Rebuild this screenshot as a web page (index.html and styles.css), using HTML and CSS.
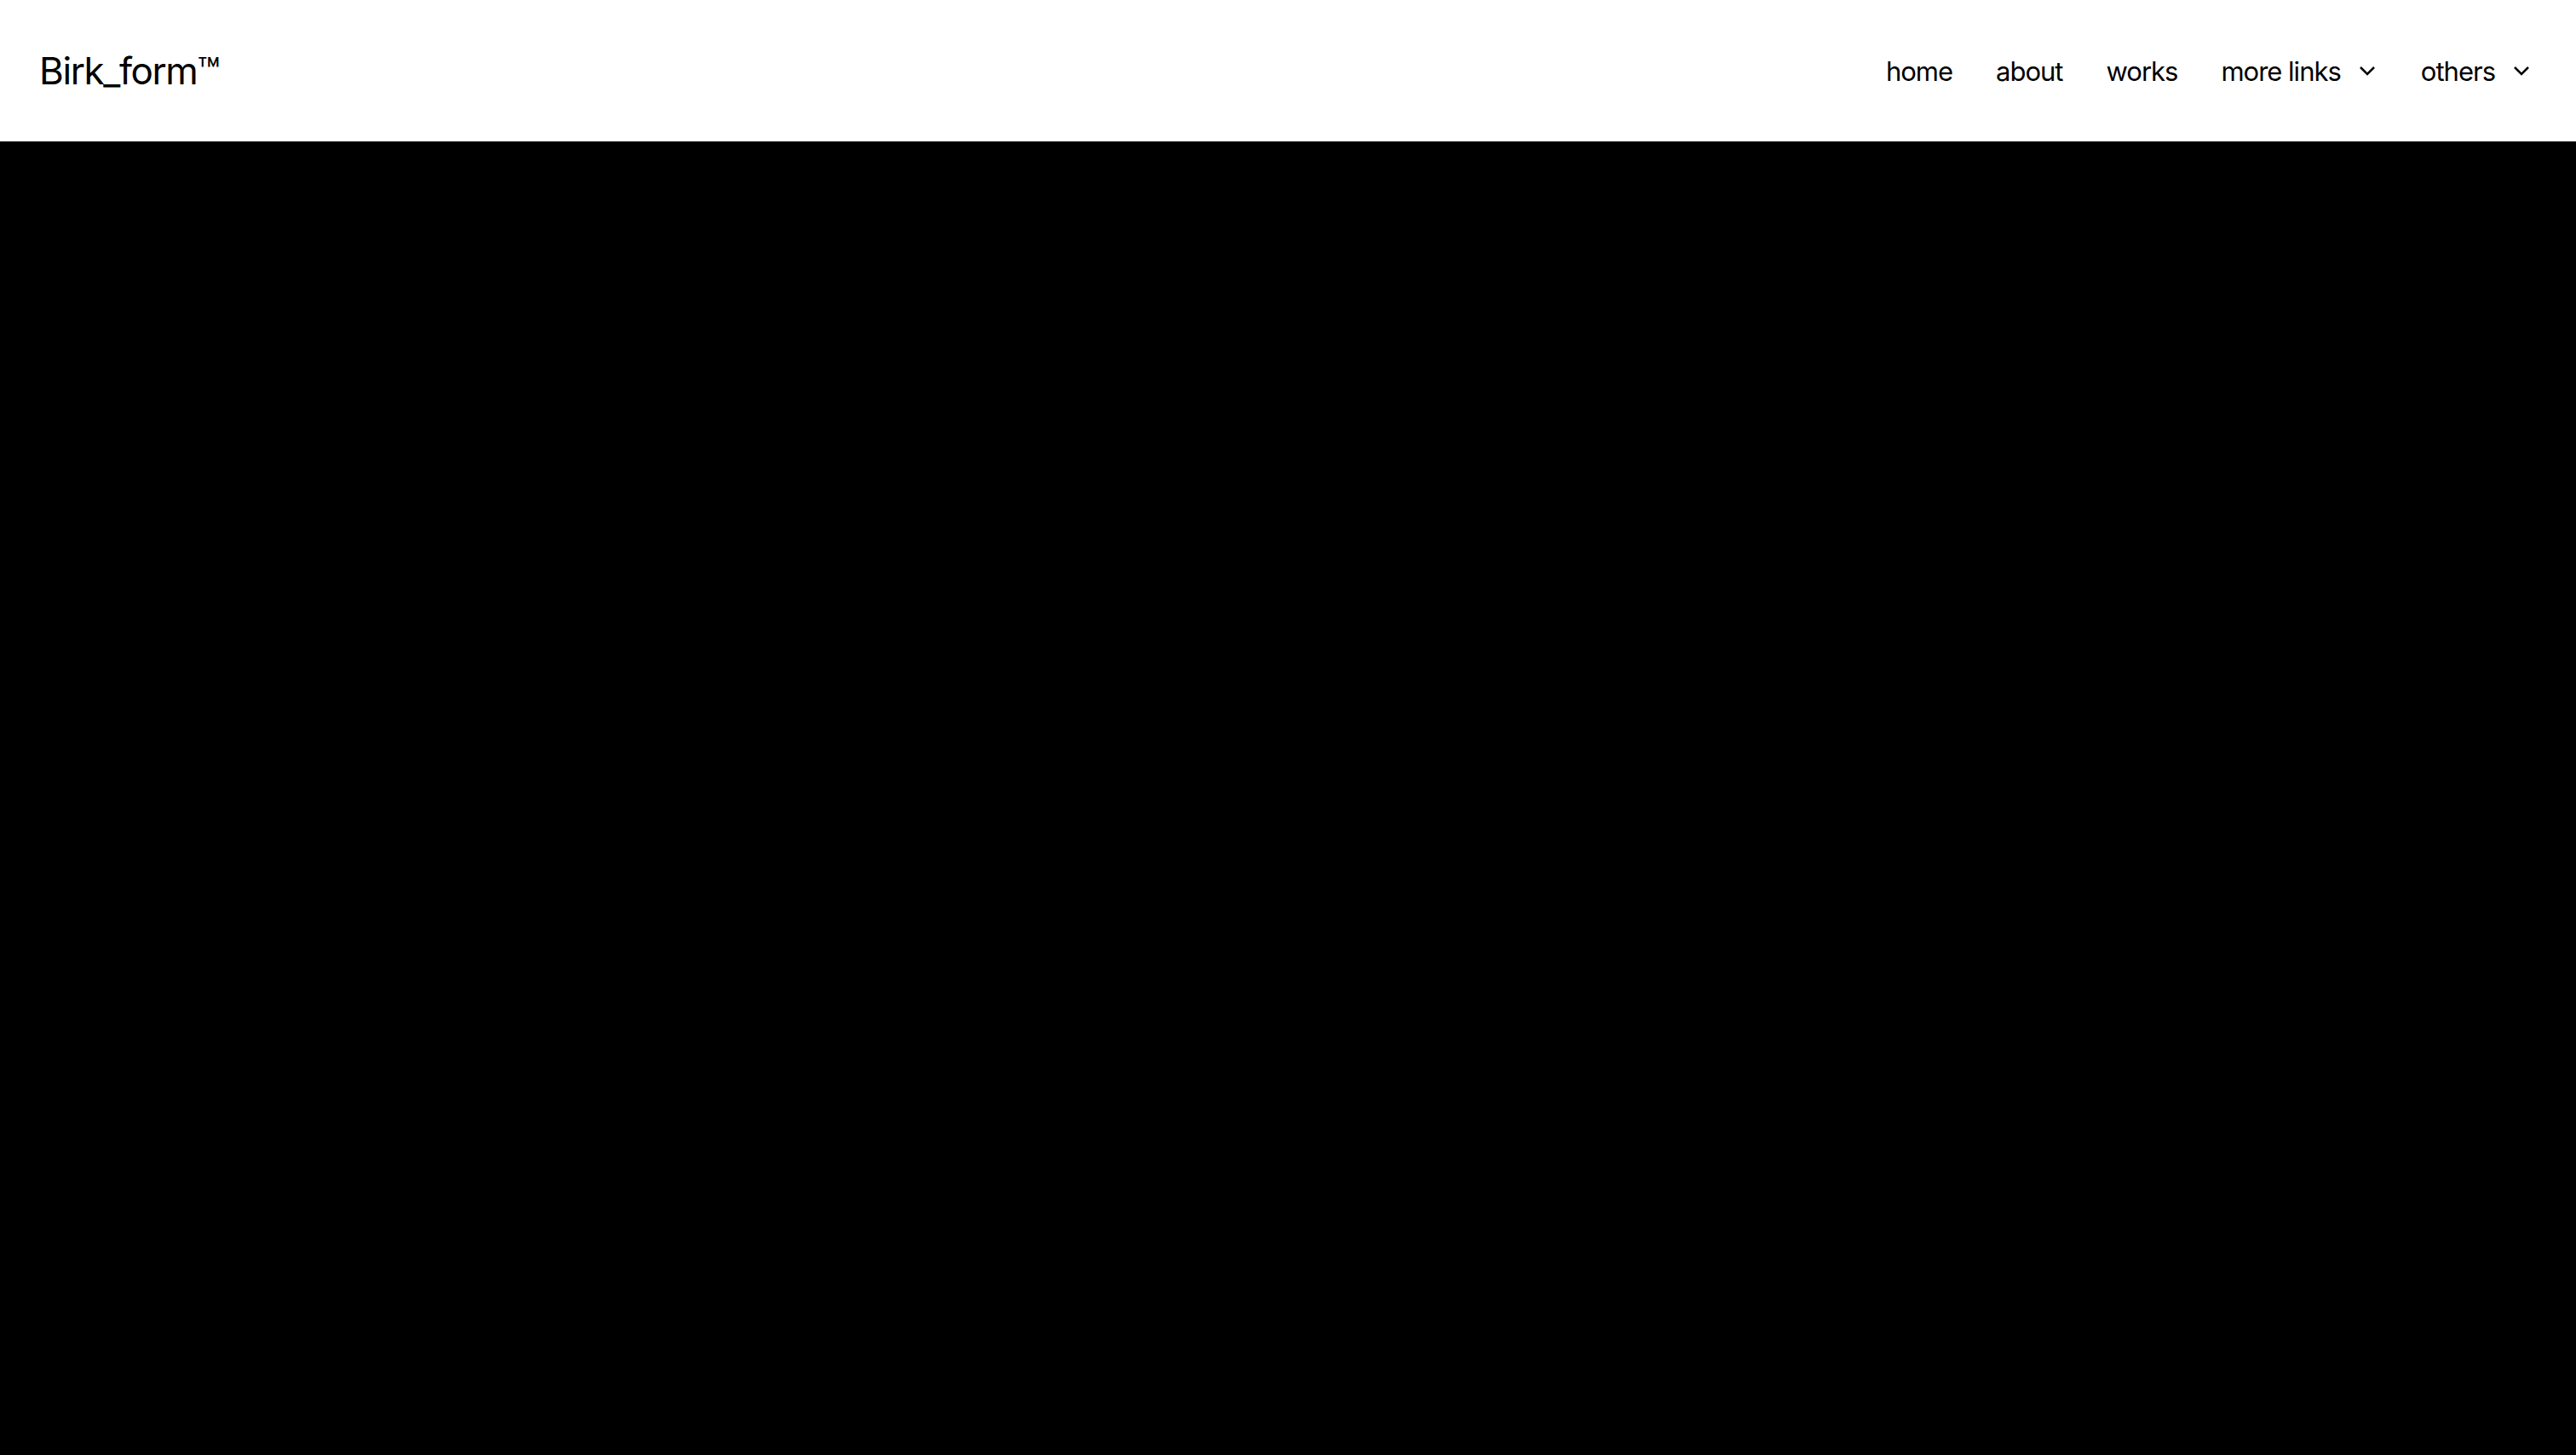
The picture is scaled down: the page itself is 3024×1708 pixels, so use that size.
FILE: index.html
```html
<!DOCTYPE html>
<html lang="en">
<head>
    <meta charset="UTF-8">
    <meta name="viewport" content="width=device-width, initial-scale=1.0">
    <title>Birk_form</title>
    <link rel="stylesheet" href="styles.css">
</head>
<body>
    <header class="site-header">
        <a class="logo" href="#">Birk_form™</a>
        <nav class="main-nav">
            <a href="#">home</a>
            <a href="#">about</a>
            <a href="#">works</a>
            <a href="#" class="has-sub">more links
                <svg class="chevron" viewBox="0 0 24 24" width="24" height="24"><path d="M4 8l8 8 8-8" /></svg>
            </a>
            <a href="#" class="has-sub">others
                <svg class="chevron" viewBox="0 0 24 24" width="24" height="24"><path d="M4 8l8 8 8-8" /></svg>
            </a>
        </nav>
    </header>
    <main class="hero"></main>
</body>
</html>
```

FILE: styles.css
```css
html, body {
    margin: 0;
    padding: 0;
    height: 100%;
}
body {
    font-family: Inter, "Noto Sans", sans-serif;
    background-color: #000;
    color: #000;
    display: flex;
    flex-direction: column;
}
a {
    color: inherit;
    text-decoration: none;
}
.site-header {
    background-color: #fff;
    height: 166px;
    display: flex;
    align-items: center;
    justify-content: space-between;
    padding: 0 52px 0 46px;
    box-sizing: border-box;
    flex-shrink: 0;
}
.logo {
    font-size: 44px;
    letter-spacing: -1.4px;
}
.main-nav {
    display: flex;
    align-items: center;
    gap: 51px;
    font-size: 31px;
    letter-spacing: -1px;
}
.main-nav a {
    display: flex;
    align-items: center;
}
.has-sub {
    gap: 19px;
}
.chevron {
    fill: none;
    stroke: #000;
    stroke-width: 2.5;
}
.hero {
    flex: 1;
    background-color: #000;
}
```
